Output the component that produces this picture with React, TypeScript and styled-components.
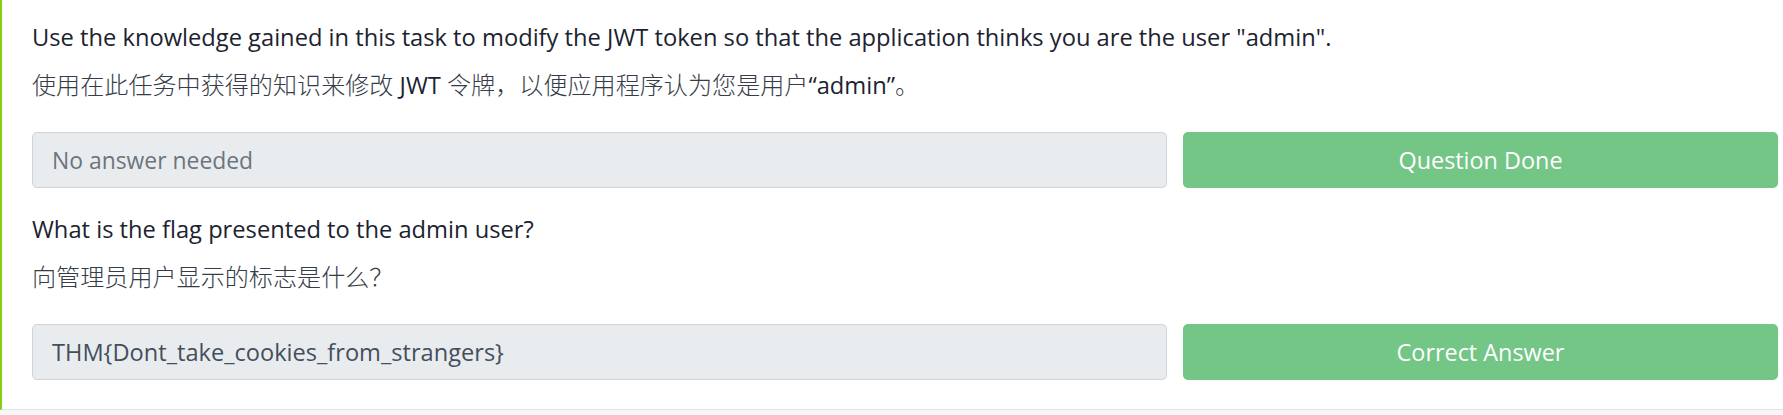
import React from "react";
import styled, { createGlobalStyle } from "styled-components";

const GlobalStyle = createGlobalStyle`
  html, body {
    margin: 0;
    padding: 0;
    background: #f7f7f7;
  }
  body {
    font-family: "Open Sans", "Noto Sans CJK SC", sans-serif;
  }
  * { box-sizing: border-box; }
`;

const Panel = styled.section`
  background: #ffffff;
  border-left: 2px solid #88cc14;
  border-bottom: 1px solid #e2e2e2;
  padding: 20px 5px 29px 30px;
  display: flex;
  flex-direction: column;
  gap: 24px;
`;

const Question = styled.div`
  display: flex;
  flex-direction: column;
`;

const Text = styled.p<{ $gapAfter: number }>`
  margin: 0 0 ${(p) => p.$gapAfter}px 0;
  height: 34px;
  font-size: 23.7px;
  line-height: 34px;
  color: #1c2330;
  white-space: nowrap;
`;

const Han = styled.span`
  font-family: "Noto Sans CJK SC", sans-serif;
  font-size: 24.1px;
  line-height: 1;
  font-weight: 300;
  color: #363c48;
`;

const AnswerRow = styled.div`
  display: grid;
  grid-template-columns: minmax(0, 1135fr) minmax(0, 595fr);
  gap: 16px;
`;

const AnswerField = styled.input<{ $filled?: boolean }>`
  height: 56px;
  width: 100%;
  padding: 0 19px;
  border: 1px solid #ced4da;
  border-radius: 5px;
  background: #e9ecef;
  font-family: "Open Sans", "Noto Sans CJK SC", sans-serif;
  font-size: ${(p) => (p.$filled ? "23.6px" : "22.9px")};
  color: ${(p) => (p.$filled ? "#454f5c" : "#6c757d")};
  outline: none;
  &::placeholder {
    color: #6c757d;
    opacity: 1;
  }
`;

const SubmitButton = styled.button`
  height: 56px;
  width: 100%;
  border: none;
  border-radius: 5px;
  background: #73c686;
  color: #ffffff;
  font-family: "Open Sans", "Noto Sans CJK SC", sans-serif;
  font-size: 23.4px;
  cursor: default;
`;

type Item = {
  en: string;
  zh: React.ReactNode;
  answer?: string;
  placeholder?: string;
  button: string;
};

const items: Item[] = [
  {
    en: 'Use the knowledge gained in this task to modify the JWT token so that the application thinks you are the user "admin".',
    zh: (
      <>
        <Han>使用在此任务中获得的知识来修改</Han> JWT <Han>令牌，以便应用程序认为您是用户</Han>
        “admin”<Han>。</Han>
      </>
    ),
    placeholder: "No answer needed",
    button: "Question Done",
  },
  {
    en: "What is the flag presented to the admin user?",
    zh: <Han>向管理员用户显示的标志是什么？</Han>,
    answer: "THM{Dont_take_cookies_from_strangers}",
    button: "Correct Answer",
  },
];

export default function App() {
  return (
    <>
      <GlobalStyle />
      <Panel>
        {items.map((it) => (
          <Question key={it.button}>
            <Text $gapAfter={14}>{it.en}</Text>
            <Text $gapAfter={30}>{it.zh}</Text>
            <AnswerRow>
              <AnswerField
                $filled={!!it.answer}
                readOnly
                value={it.answer ?? ""}
                placeholder={it.placeholder}
              />
              <SubmitButton type="button">{it.button}</SubmitButton>
            </AnswerRow>
          </Question>
        ))}
      </Panel>
    </>
  );
}
